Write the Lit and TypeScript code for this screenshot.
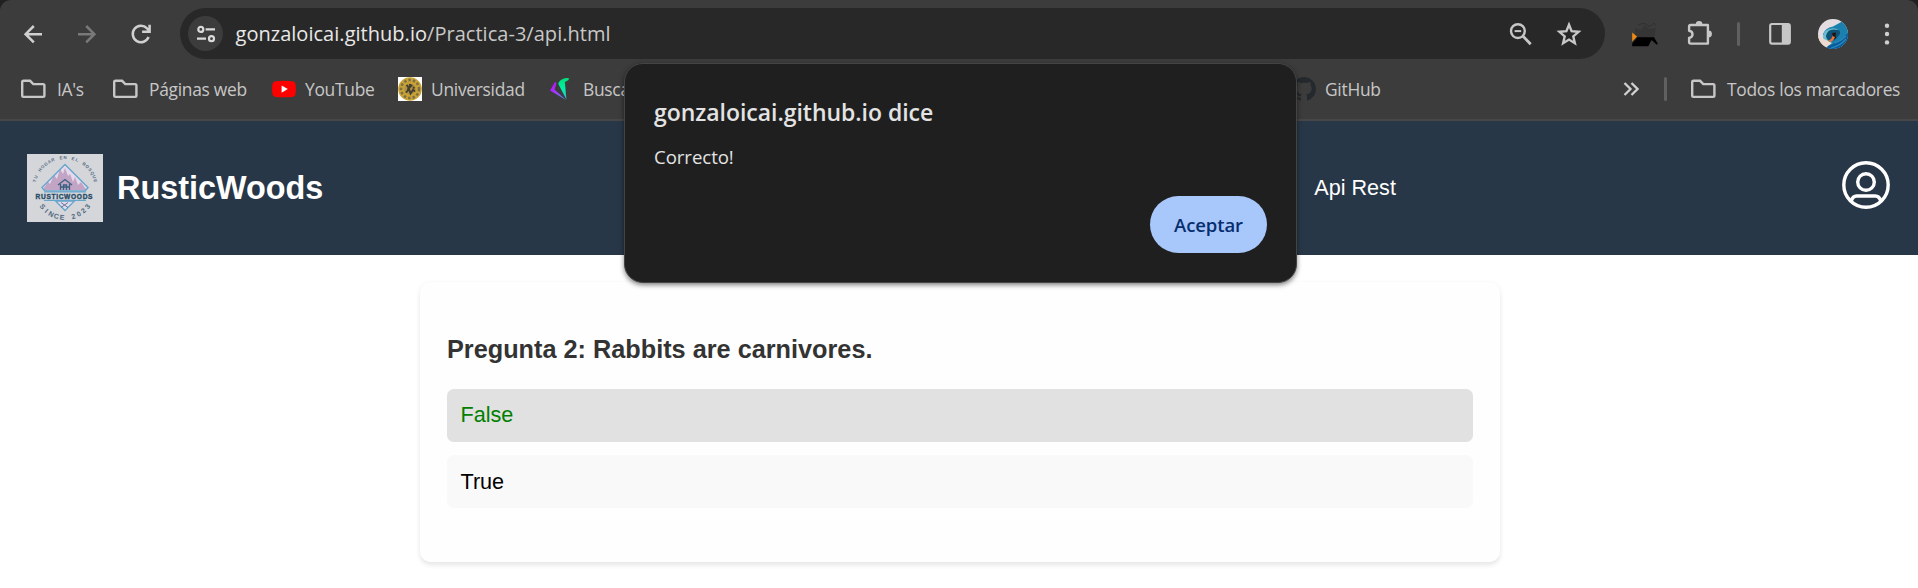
import { LitElement, html, svg, css } from "lit";
import { customElement } from "lit/decorators.js";
import { classMap } from "lit/directives/class-map.js";

const folder = html`<svg class="ic" width="27" height="24" viewBox="0 0 27 24"><path d="M3.2 4.4h6.6l3.2 3.3h9.8a1.3 1.3 0 0 1 1.3 1.3v10.2a1.3 1.3 0 0 1-1.3 1.3H3.2a1.3 1.3 0 0 1-1.3-1.3V5.7a1.3 1.3 0 0 1 1.3-1.3z" transform="translate(-.7 -.6)" fill="none" stroke="#c7c7c7" stroke-width="2.4"/></svg>`;

const youtube = html`<svg class="ic" width="24" height="24" viewBox="0 0 24 24"><path d="M3.5 4.3Q12 3.3 20.5 4.3 23.3 4.6 23.6 7.2 24.2 12 23.6 17 23.3 19.6 20.5 19.9 12 20.7 3.5 19.9.7 19.6.4 17-.2 12 .4 7.2.7 4.6 3.5 4.3z" fill="#f00"/><path d="M9.6 8.5v7.2l6.2-3.6z" fill="#fff"/></svg>`;

const university = html`<svg class="ic" width="24" height="24" viewBox="0 0 24 24"><path fill="#fff" d="M0 0h24v24H0z"/><circle cx="12" cy="12" r="11.8" fill="#c9a336"/><circle cx="12" cy="12" r="9" fill="none" stroke="#7d7044" stroke-width="2.6" stroke-dasharray="2.5 2"/><circle cx="12" cy="12" r="5.8" fill="#b1923e"/><path d="M8.5 8l2 2.2-.7 3.4-2 2M12 7v3l2.2-2M11 12l1.6 4.4 2.6-3.6 1.8 1.8M14.7 10.5l2 .4" fill="none" stroke="#443f31" stroke-width="1.9"/></svg>`;

const search = html`<svg class="ic" width="24" height="24" viewBox="0 0 24 24"><defs><linearGradient id="p" x1="0" y1="0" x2="1" y2="1"><stop stop-color="#c800ff"/><stop offset=".55" stop-color="#9746ff"/><stop offset="1" stop-color="#3aa0ef"/></linearGradient><linearGradient id="g" x1="0" y1="0" x2="0" y2="1"><stop stop-color="#00dc78"/><stop offset=".5" stop-color="#00f2a5"/><stop offset="1" stop-color="#36b5df"/></linearGradient></defs><path d="M5 5L0 13.500l16 9.500L4.500 12.500 6.500 6z" fill="url(#p)"/><path d="M18.800 1C13 1 9.500 3 8.200 6.800l8.200 15.700-1.500-17.500 3.700-2z" fill="url(#g)"/></svg>`;

const github = html`<svg class="ic" width="24" height="24" viewBox="0 0 16 16"><path fill="#24292e" d="M8 0C3.58 0 0 3.58 0 8c0 3.54 2.29 6.53 5.47 7.59.4.07.55-.17.55-.38 0-.19-.01-.82-.01-1.49-2.01.37-2.53-.49-2.69-.94-.09-.23-.48-.94-.82-1.13-.28-.15-.68-.52-.01-.53.63-.01 1.08.58 1.23.82.72 1.21 1.87.87 2.33.66.07-.52.28-.87.51-1.07-1.78-.2-3.64-.89-3.64-3.95 0-.87.31-1.59.82-2.15-.08-.2-.36-1.02.08-2.12 0 0 .67-.21 2.2.82.64-.18 1.32-.27 2-.27s1.36.09 2 .27c1.53-1.04 2.2-.82 2.2-.82.44 1.1.16 1.92.08 2.12.51.56.82 1.27.82 2.15 0 3.07-1.87 3.75-3.65 3.95.29.25.54.73.54 1.48 0 1.07-.01 1.93-.01 2.2 0 .21.15.46.55.38A8.01 8.01 0 0 0 16 8c0-4.42-3.58-8-8-8z"/></svg>`;

const bookmarks = [
  { label: "IA's", icon: folder, slot: 92 },
  { label: "Páginas web", icon: folder, slot: 159 },
  { label: "YouTube", icon: youtube, slot: 126 },
  { label: "Universidad", icon: university, slot: 152 },
  { label: "Buscador", icon: search, slot: 742 },
  { label: "GitHub", icon: github, slot: 120 },
];

@customElement("browser-toolbar")
class BrowserToolbar extends LitElement {
  static styles = css`
    :host { display: block; background: #202020; }
    .shell { box-sizing: border-box; height: 121px; background: #3c3c3c; border-radius: 11px 11px 0 0; border-bottom: 2px solid #474747;
      font-family: "Open Sans", "Noto Sans", sans-serif; color: #c7c7c7; }
    .row { display: flex; align-items: center; height: 51px; padding: 8px 18px 0 18px; }
    svg { display: block; flex: none; }
    .nav { display: flex; gap: 24px; width: 162px; }
    .omni { box-sizing: border-box; display: flex; align-items: center; width: 1425px; height: 51px; border-radius: 26px; background: #282828; padding: 0 21px 0 8px; }
    .info { display: grid; place-items: center; width: 35px; height: 35px; border-radius: 50%; background: #3c3c3c; }
    .url { flex: 1; padding-left: 12.5px; font-size: 20px; line-height: 28px; color: #c7c7c7; letter-spacing: .03px; white-space: nowrap; }
    .host { color: #e8e8e8; }
    .tools { display: flex; gap: 19px; }
    .actions { display: flex; align-items: center; flex: 1; margin-left: 24px; }
    .puzzle { margin-left: 27px; }
    .sep { width: 3px; height: 24px; border-radius: 2px; background: #606060; }
    .s1 { margin-left: 21px; }
    .panel { margin-left: 28px; }
    .face { margin-left: 26px; }
    .dots { margin-left: 31px; }
    .marks { display: flex; align-items: center; height: 60px; padding: 0 0 0 21px; }
    .mark { display: flex; align-items: center; gap: 9px; flex: none; font-size: 17.4px; line-height: 24px; letter-spacing: -.28px; white-space: nowrap; }
    .more { margin-left: auto; }
    .s2 { margin-left: 25px; margin-right: 24px; }
    .all { width: 227px; }
  `;
  render() {
    return html`<div class="shell">
      <div class="row">
        <div class="nav">
          <svg width="30" height="30" viewBox="0 0 30 30" fill="none" stroke="#d0d0d0" stroke-width="2.5"><path d="M24 15.2H8M15.8 7L7.6 15.2l8.2 8.2"/></svg>
          <svg width="30" height="30" viewBox="0 0 30 30" fill="none" stroke="#797979" stroke-width="2.5"><path d="M6 15.2h16M14.2 7l8.2 8.2-8.2 8.2"/></svg>
          <svg width="30" height="30" viewBox="0 0 30 30" fill="none" stroke="#d0d0d0" stroke-width="2.5"><path d="M22.6 18a8.2 8.2 0 1 1-1.6-8.600l2.600 2.600M23.600 5.800v7h-7.500"/></svg>
        </div>
        <div class="omni">
          <div class="info"><svg width="20" height="18" viewBox="0 0 20 18" fill="none" stroke="#dadada" stroke-width="2.2"><circle cx="4.8" cy="4.4" r="2.5"/><path d="M9.6 4.4H19M1 13.7h9"/><circle cx="15.5" cy="13.7" r="2.5"/></svg></div>
          <div class="url"><span class="host">gonzaloicai.github.io</span>/Practica-3/api.html</div>
          <div class="tools">
            <svg width="30" height="30" viewBox="0 0 30 30" fill="none" stroke="#c7c7c7" stroke-width="2.4"><circle cx="12.9" cy="12.1" r="6.9"/><path d="M17.8 17l7.9 8.2" stroke-width="2.8"/><path d="M9.6 12.1h6.6" stroke-width="2"/></svg>
            <svg width="30" height="30" viewBox="0 0 30 30" fill="none" stroke="#c7c7c7" stroke-width="2.4"><path d="M15 5.8l2.6 6.4 7 .6-5.3 4.6 1.6 6.8-5.9-3.6-5.9 3.6 1.6-6.8-5.3-4.6 7-.6z"/></svg>
          </div>
        </div>
        <div class="actions">
          <svg width="30" height="30" viewBox="0 0 30 30"><path d="M6 9l6 2 4-5 4 4 7-1-2 10H6z" fill="#353535"/><path d="M9 6q7-3 9 0t7-2l2 3" fill="none" stroke="#303030"/><path d="M3.2 13.5L8 17.5l-4.8 5z" fill="#f08a10"/><path d="M8.5 18.2H25l4 6.8-1.5.6-5-4.6-3.2 6.3H3.2v-3z" fill="#000"/></svg>
          <svg class="puzzle" width="30" height="30" viewBox="0 0 30 30"><path d="M5.500 5.700h17.300v18.600H5.500q-1.500 0-1.500-1.500v-4.200q3.400-.5 3.400-3.600T4 11.400V7.200q0-1.500 1.500-1.500z" transform="translate(-.9 .3)" fill="none" stroke="#c7c7c7" stroke-width="2.4" stroke-linejoin="round"/><path d="M9.800 5.400a3.300 3.300 0 0 1 6.600 0zM22.500 11.600a3.400 3.400 0 0 1 0 6.800z" fill="#c7c7c7"/></svg>
          <div class="sep s1"></div>
          <svg class="panel" width="24" height="24" viewBox="0 0 24 24"><rect x="2.200" y="2" width="19.600" height="19.600" rx="1.800" fill="none" stroke="#c7c7c7" stroke-width="2.200"/><path d="M13.800 2h8v19.600h-8z" fill="#c7c7c7"/></svg>
          <svg class="face" width="30" height="30" viewBox="0 0 30 30"><defs><clipPath id="c"><circle cx="15" cy="15" r="15"/></clipPath></defs><g clip-path="url(#c)"><path fill="#e3dde2" d="M0 0h30v30H0z"/><path d="M5 15Q7 9 15 7.500L25 2l5 5v23H10z" fill="#1b80ad"/><path d="M8 17q1-6 8-7 7 0 6 5l-5 6-8 3z" fill="#0e5276"/><path d="M7 12q8-5 14-1l-3-.3q-7-.7-9 3.300-2 3 0 6l3 3-5 1q-4-6 0-12z" fill="#6cbccd"/><path d="M0 17l8 4 6 3-5 4-10-3z" fill="#ecdad0"/><path d="M10 27q11-3 20-13v16H8z" fill="#075b9b"/><path d="M13 29q9-2 15-9M17 24q6-2 11-7" stroke="#2d88bb" fill="none" stroke-width="1.200"/><path d="M14 14l4-.5-.5 3.500.5 2-3 2-2-2 2-2z" fill="#28100d"/><path d="M14.500 17l2.500 1-1.500 3-2.500 2-3-1 3-2z" fill="#e37543"/></g></svg>
          <svg class="dots" width="16" height="30" viewBox="0 0 16 30" fill="#d0d0d0"><circle cx="8" cy="6.800" r="2.200"/><circle cx="8" cy="15" r="2.200"/><circle cx="8" cy="23.400" r="2.200"/></svg>
        </div>
      </div>
      <div class="marks">
        ${bookmarks.map((b) => html`<div class="mark" style="width:${b.slot}px">${b.icon}<span>${b.label}</span></div>`)}
        <svg class="more" width="16" height="16" viewBox="0 0 16 16" fill="none" stroke="#d0d0d0" stroke-width="2.300"><path d="M1.500 2l6 6-6 6M8.500 2l6 6-6 6"/></svg>
        <div class="sep s2"></div>
        <div class="mark all">${folder}<span>Todos los marcadores</span></div>
      </div>
    </div>`;
  }
}

const arcText = (text: string, radius: number, from: number, to: number, size: number, below: boolean) =>
  [...text].map((ch, i) => {
    const a = from + ((to - from) * i) / (text.length - 1);
    const r = (a * Math.PI) / 180;
    const x = 38 + radius * Math.sin(r);
    const y = 35 - radius * Math.cos(r);
    return svg`<text x=${x} y=${y} font-size=${size} font-weight="700" text-anchor="middle" dominant-baseline="central" fill="#50697f" transform="rotate(${below ? a - 180 : a} ${x} ${y})">${ch}</text>`;
  });

@customElement("site-header")
class SiteHeader extends LitElement {
  static styles = css`
    :host { display: flex; align-items: center; box-sizing: border-box; height: 134px; padding: 0 27px; background: #283747; color: #fff;
      font-family: "Liberation Sans", Arial, sans-serif; font-size: 21.6px; }
    .logo { display: block; margin-right: 14px; font-family: "Liberation Sans", sans-serif; }
    .brand { font-size: 32.4px; line-height: 38px; font-weight: 700; width: 1197.300px; }
    .user { display: block; margin-left: auto; margin-top: -7px; }
  `;
  render() {
    return html`
      <svg class="logo" width="76" height="68" viewBox="0 0 76 68">
        <path fill="#d4d6da" d="M0 0h76v68H0z"/>
        ${arcText("TU HOGAR EN EL BOSQUE", 31.500, -75, 75, 4.300, false)}
        <path d="M38 10.500L61 33.500l-3 3.500H18l-3-3.500z" fill="#e5daeb"/>
        <path d="M17 34l4-6 2 2 4-9 3 4 3-10 3 5 2-6 3 8 2-2 3 8 2-5 3 8 3-3 4 6 2 2H17z" fill="#c2a4c5"/>
        <path d="M38 10.500L61 33.500l-3 3.500H18l-3-3.500z" fill="none" stroke="#66a5cc" stroke-width="1.400"/>
        <path d="M31 31l7-5.500 7 5.500M33.500 30v6M42.500 30v6M36.500 36v-5h3v5M33.500 33h9" fill="none" stroke="#3a607f" stroke-width="1.300"/>
        <path d="M28.500 47h19L38 56.500z" fill="#e5daeb" stroke="#66a5cc" stroke-width="1.300"/>
        <path d="M34 48.500l7 5m0-5l-7 5" stroke="#617a99" stroke-width="1"/>
        <path d="M8 38.500h58v7H8z" fill="#d4d6da"/><path d="M17 38h42M17 46.300h42" stroke="#66a5cc" stroke-width="1.200"/>
        <text x="37" y="44.600" font-size="6.600" font-weight="700" text-anchor="middle" textLength="57" fill="#284b66" stroke="#284b66" stroke-width=".35">RUSTICWOODS</text>
        ${arcText("SINCE 2023", 28.500, 232, 128, 7, true)}
      </svg>
      <div class="brand">RusticWoods</div>
      <div>Api Rest</div>
      <svg class="user" width="50" height="50" viewBox="0 0 50 50" fill="none" stroke="#fff" stroke-width="3.400"><circle cx="25" cy="25" r="22.200"/><circle cx="25" cy="22" r="8.300"/><path d="M10.200 41q1.500-5 5.500-5h18.600q4 0 5.500 5"/></svg>
    `;
  }
}

const options = [
  { label: "False", chosen: true },
  { label: "True", chosen: false },
];

@customElement("quiz-card")
class QuizCard extends LitElement {
  static styles = css`
    :host { display: block; box-sizing: border-box; width: 1080px; height: 280px; margin: 27px 418px 0 420px; padding: 53px 27px 0; border-radius: 10.800px; background: #fefefe;
      box-shadow: 0 2.700px 5.400px rgba(0, 0, 0, .1); font-family: "Liberation Sans", Arial, sans-serif; font-size: 21.600px; color: #000; }
    .question { margin: 0 0 25px; font-size: 25.270px; line-height: 29px; font-weight: 700; color: #333; }
    .option { box-sizing: border-box; height: 53px; margin-bottom: 13.400px; padding: 13.300px 13.500px; line-height: 25px; border-radius: 6.750px; background: #f9f9f9; }
    .chosen { background: #e1e1e1; color: #008000; }
  `;
  render() {
    return html`<h3 class="question">Pregunta 2: Rabbits are carnivores.</h3>
      ${options.map((o) => html`<div class=${classMap({ option: true, chosen: o.chosen })}>${o.label}</div>`)}`;
  }
}

@customElement("alert-dialog")
class AlertDialog extends LitElement {
  static styles = css`
    :host { display: flex; flex-direction: column; box-sizing: border-box; width: 673px; height: 220px; padding: 32px 29px 29px 29px; background: #1f1f1f;
      border: 1px solid #444; border-radius: 19px; box-shadow: 0 2px 5px rgba(0, 0, 0, .5);
      font-family: "Open Sans", "Noto Sans", sans-serif; color: #e3e3e3; }
    .title { font-size: 23px; line-height: 32px; font-weight: 600; letter-spacing: -.03px; }
    .text { margin-top: 15px; font-size: 18.600px; line-height: 27px; letter-spacing: -.05px; }
    .ok { align-self: flex-end; margin-top: auto; width: 117px; height: 57px; border: 0; border-radius: 29px; padding: 0; background: #a8c7fa; color: #062e6f;
      font: 600 18.500px/27px "Open Sans", "Noto Sans", sans-serif; letter-spacing: -.1px; }
  `;
  render() {
    return html`<div class="title">gonzaloicai.github.io dice</div>
      <div class="text">Correcto!</div>
      <button class="ok">Aceptar</button>`;
  }
}

@customElement("app-root")
class AppRoot extends LitElement {
  static styles = css`
    :host { display: block; position: relative; height: 588px; overflow: hidden; background: #fff; }
    .modal { position: absolute; top: 63px; left: 624px; }
  `;
  render() {
    return html`<browser-toolbar></browser-toolbar>
      <site-header></site-header>
      <quiz-card></quiz-card>
      <alert-dialog class="modal"></alert-dialog>`;
  }
}
